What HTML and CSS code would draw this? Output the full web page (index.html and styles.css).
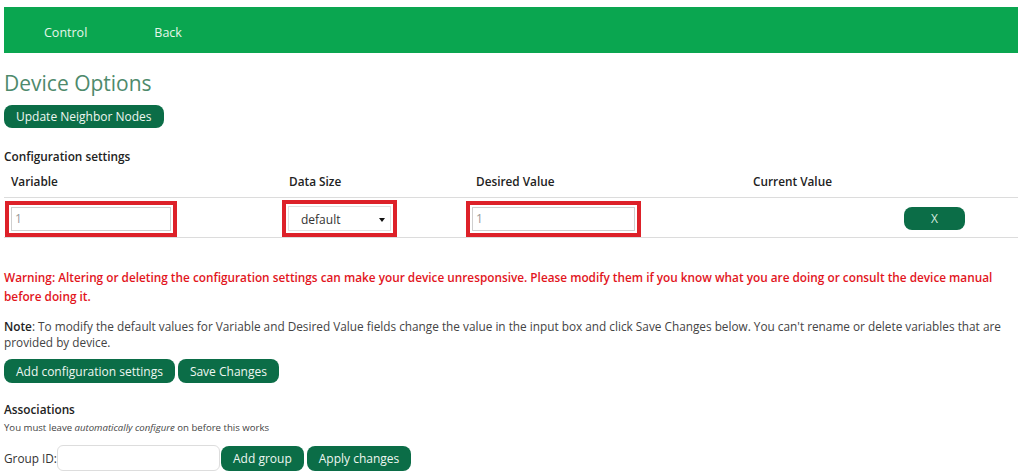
FILE: index.html
```html
<!DOCTYPE html>
<html lang="en">
<head>
    <meta charset="UTF-8">
    <title>Device Options</title>
    <link rel="stylesheet" href="styles.css">
</head>
<body>
    <div class="topbar">
        <a href="#">Control</a>
        <a href="#">Back</a>
    </div>

    <h1>Device Options</h1>
    <button class="btn">Update Neighbor Nodes</button>

    <div class="section-title">Configuration settings</div>
    <div class="config">
        <div class="th">Variable</div>
        <div class="th">Data Size</div>
        <div class="th th-wide">Desired Value</div>
        <div class="th">Current Value</div>
        <div class="th"></div>

        <div class="td">
            <div class="mark mark-var"><input type="text" value="1"></div>
        </div>
        <div class="td">
            <div class="mark mark-size">
                <div class="select">default</div>
            </div>
        </div>
        <div class="td">
            <div class="mark mark-val"><input type="text" value="1"></div>
        </div>
        <div class="td"></div>
        <div class="td td-del"><button class="btn btn-x">X</button></div>
    </div>

    <p class="warning">Warning: Altering or deleting the configuration settings can make your device unresponsive. Please modify them if you know what you are doing or consult the device manual before doing it.</p>
    <p class="note"><b>Note</b>: To modify the default values for Variable and Desired Value fields change the value in the input box and click Save Changes below. You can't rename or delete variables that are provided by device.</p>

    <div class="actions">
        <button class="btn">Add configuration settings</button>
        <button class="btn">Save Changes</button>
    </div>

    <div class="section-title assoc">Associations</div>
    <div class="hint">You must leave <i>automatically configure</i> on before this works</div>

    <div class="group-row">
        <label for="gid">Group ID:</label>
        <input id="gid" class="group-input" type="text">
        <button class="btn btn-tall">Add group</button>
        <button class="btn btn-tall">Apply changes</button>
    </div>
</body>
</html>
```

FILE: styles.css
```css
body {
    font-family: "Open Sans", "DejaVu Sans", sans-serif;
    font-size: 11.8px;
    color: #333;
    margin: 0;
    padding: 7px 6px 0 4px;
    background: #fff;
}
.topbar {
    background-color: #0aa650;
    height: 46px;
    box-sizing: border-box;
    padding: 4px 0 0 40px;
    display: flex;
    align-items: center;
    gap: 67px;
}
.topbar a {
    color: #e6f6ea;
    text-decoration: none;
    font-size: 12.5px;
}
h1 {
    font-size: 21px;
    font-weight: 400;
    line-height: 28px;
    color: #4e8a6c;
    margin: 16px 0 8px;
}
.btn {
    font-family: inherit;
    font-size: 12px;
    color: #eef7f1;
    background-color: #0b6d47;
    border: none;
    border-radius: 8px;
    height: 23px;
    padding: 0 12px;
    cursor: pointer;
}
.section-title {
    font-weight: 600;
    color: #222;
    line-height: 17px;
    margin-top: 20px;
}
.config {
    display: grid;
    grid-template-columns: 278px 184px 280px 145px 1fr;
    margin-top: 8px;
}
.th {
    font-weight: 600;
    color: #222;
    line-height: 17px;
    padding: 0 0 7px 7px;
    border-bottom: 1px solid #dcdcdc;
}
.th-wide {
    padding-left: 10px;
}
.td {
    padding: 2px 0 0;
    border-bottom: 1px solid #dcdcdc;
    display: flex;
    align-items: center;
}
.mark {
    border: 4px solid #dd2129;
    padding: 2px;
    background: #fff;
}
.mark-var {
    margin-left: 1px;
}
.mark input {
    font-family: inherit;
    font-size: 12px;
    color: #999;
    height: 24px;
    box-sizing: border-box;
    border: 1px solid #cfcfcf;
    padding: 0 3px;
    display: block;
}
.mark-var input {
    width: 160px;
}
.mark-val input {
    width: 163px;
}
.select {
    width: 103px;
    height: 25px;
    box-sizing: border-box;
    border: 1px solid #e2e2e2;
    line-height: 25px;
    padding-left: 12px;
    color: #333;
    font-size: 12px;
    position: relative;
}
.select::after {
    content: "";
    position: absolute;
    right: 5px;
    top: 11px;
    border-left: 3px solid transparent;
    border-right: 3px solid transparent;
    border-top: 4px solid #111;
}
.td-del {
    padding-left: 13px;
}
.btn-x {
    width: 61px;
    font-size: 12px;
    color: #d6eadf;
}
.warning {
    color: #e2151d;
    font-weight: 600;
    line-height: 19px;
    margin: 30px 0 0;
}
.note {
    line-height: 16px;
    color: #444;
    margin: 12px 0 0;
}
.note b {
    font-weight: 600;
    color: #222;
}
.actions {
    display: flex;
    gap: 3px;
    margin-top: 9px;
}
.actions .btn {
    height: 24px;
}
.assoc {
    margin-top: 18px;
}
.hint {
    font-size: 9.6px;
    line-height: 14px;
    color: #444;
    margin-top: 3px;
}
.group-row {
    display: flex;
    align-items: center;
    gap: 3px;
    margin-top: 10px;
}
.group-row label {
    width: 50px;
    flex-shrink: 0;
    white-space: nowrap;
    color: #333;
}
.group-input {
    width: 163px;
    height: 26px;
    box-sizing: border-box;
    border: 1px solid #ddd;
    border-radius: 6px;
    margin-right: -2px;
}
.btn-tall {
    height: 25px;
}
```
